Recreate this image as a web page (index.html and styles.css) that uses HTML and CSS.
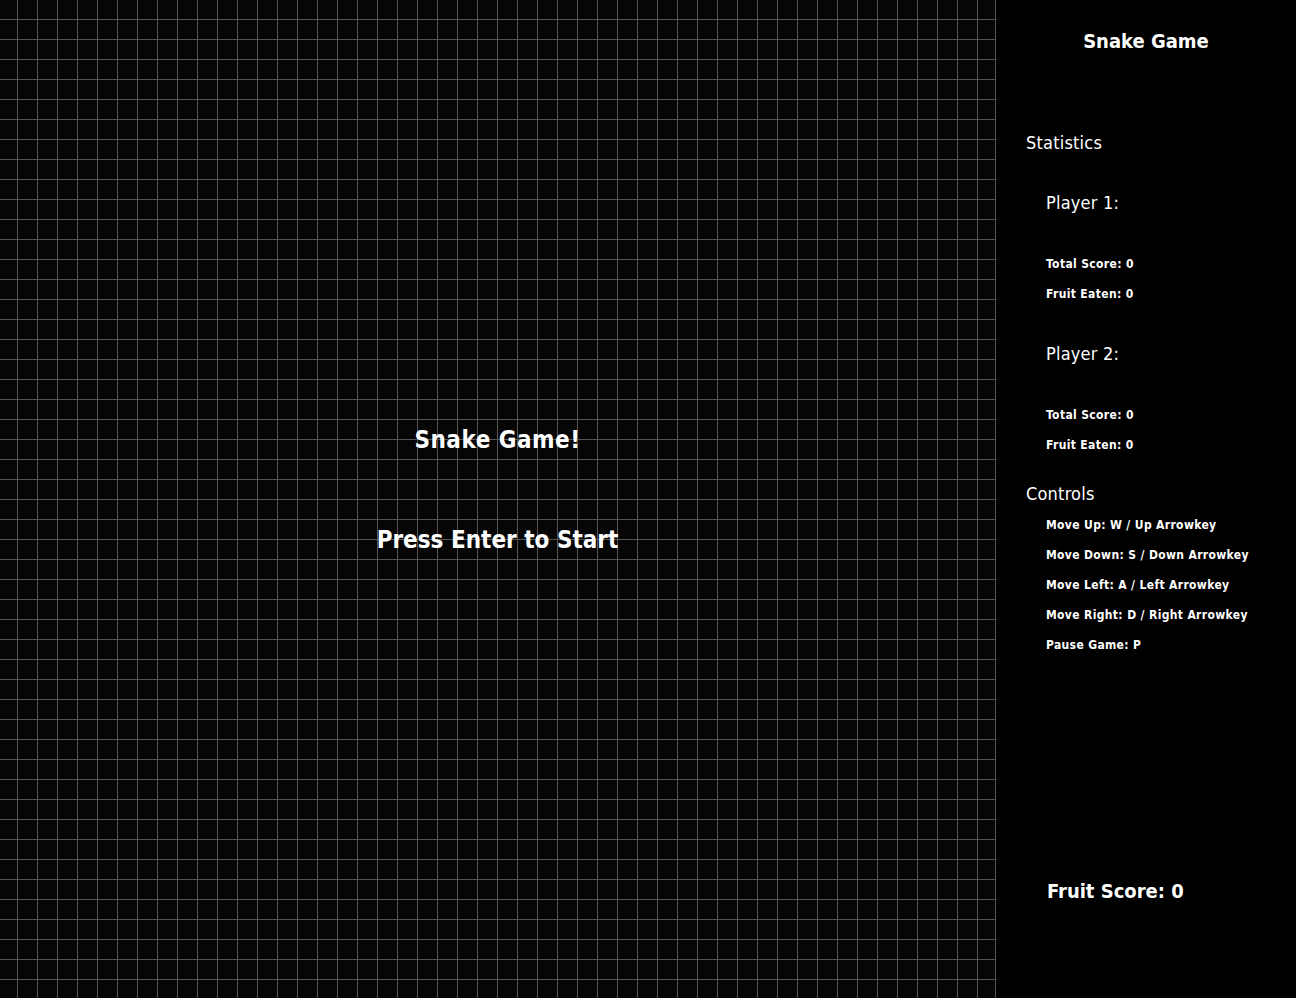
FILE: index.html
```html
<!DOCTYPE html>
<html>
<head>
<meta charset="utf-8">
<title>Snake Game</title>
<link rel="stylesheet" href="styles.css">
</head>
<body>
<div class="app">
  <main class="board">
    <div class="board-title">Snake Game!</div>
    <div class="board-prompt">Press Enter to Start</div>
  </main>
  <aside class="sidebar">
    <h1 class="side-title">Snake Game</h1>
    <h2 class="section">Statistics</h2>
    <h3 class="player">Player 1:</h3>
    <div class="item first">Total Score: 0</div>
    <div class="item">Fruit Eaten: 0</div>
    <h3 class="player">Player 2:</h3>
    <div class="item first">Total Score: 0</div>
    <div class="item">Fruit Eaten: 0</div>
    <h2 class="section controls">Controls</h2>
    <div class="item tight">Move Up: W / Up Arrowkey</div>
    <div class="item">Move Down: S / Down Arrowkey</div>
    <div class="item">Move Left: A / Left Arrowkey</div>
    <div class="item">Move Right: D / Right Arrowkey</div>
    <div class="item">Pause Game: P</div>
    <div class="fruit-score">Fruit Score: 0</div>
  </aside>
</div>
</body>
</html>
```
FILE: styles.css
```css
html, body {
  margin: 0;
  padding: 0;
  background: #000;
  overflow: hidden;
}
body {
  font-family: "DejaVu Sans Condensed", "DejaVu Sans", sans-serif;
  font-stretch: condensed;
  color: #fff;
}
.app {
  display: flex;
  width: 1296px;
  height: 998px;
}
.board {
  width: 996px;
  height: 998px;
  border-right: 1px solid #555;
  background-color: #060606;
  background-image:
    linear-gradient(to right, #555 1px, transparent 1px),
    linear-gradient(to bottom, #555 1px, transparent 1px);
  background-size: 20px 20px, 20px 20px;
  background-position: 17px 0, 0 19px;
  display: flex;
  flex-direction: column;
  align-items: center;
  padding-top: 425px;
  box-sizing: border-box;
  font-weight: bold;
  font-size: 24px;
  line-height: 30px;
}
.board-title {
  letter-spacing: 0.5px;
}
.board-prompt {
  margin-top: 70px;
}
.sidebar {
  flex: 1;
  display: flex;
  flex-direction: column;
  padding-left: 30px;
  box-sizing: border-box;
}
.side-title {
  margin: 26px 0 0 -30px;
  font-size: 20px;
  line-height: 30px;
  font-weight: bold;
  text-align: center;
}
.section {
  margin: 72px 0 0 0;
  font-size: 18px;
  font-weight: normal;
  line-height: 30px;
  letter-spacing: 0.2px;
}
.section.controls {
  margin-top: 19px;
}
.player {
  margin: 30px 0 0 20px;
  font-size: 18px;
  font-weight: normal;
  line-height: 30px;
  letter-spacing: 0.2px;
}
.item {
  margin-left: 20px;
  font-size: 12px;
  font-weight: bold;
  line-height: 30px;
  letter-spacing: 0.35px;
}
.item.first {
  margin-top: 31px;
}
.item.tight {
  margin-top: 1px;
}
.fruit-score {
  margin-top: auto;
  margin-left: 21px;
  margin-bottom: 92px;
  font-size: 20px;
  font-weight: bold;
  line-height: 30px;
}
```
